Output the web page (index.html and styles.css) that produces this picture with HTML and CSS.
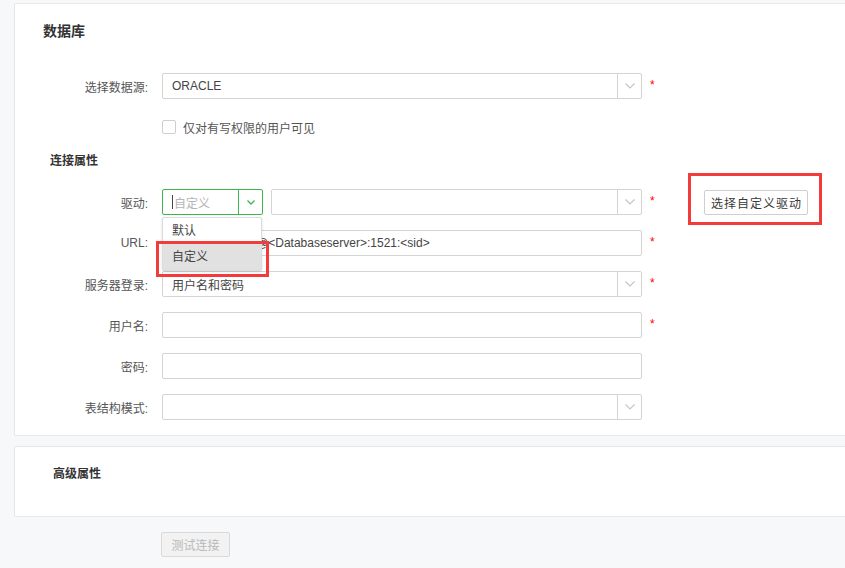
FILE: index.html
```html
<!DOCTYPE html>
<html lang="zh-CN">
<head>
<meta charset="utf-8">
<title>数据库连接</title>
<link rel="stylesheet" href="styles.css">
</head>
<body>
<div class="page">
  <section class="card card-db">
    <h2 class="card-title">数据库</h2>
    <div class="form">
      <div class="row">
        <label class="lbl">选择数据源:</label>
        <div class="select w-full"><span class="val">ORACLE</span><span class="arrow"><svg width="10" height="6" viewBox="0 0 10 6"><polyline points="0.5,0.5 5,5 9.5,0.5" fill="none" stroke="#c4c4c4" stroke-width="1.1"/></svg></span></div>
        <span class="req">*</span>
      </div>
      <div class="row-check">
        <span class="check"></span><span class="check-text">仅对有写权限的用户可见</span>
      </div>
      <h3 class="sub-title">连接属性</h3>
      <div class="row">
        <label class="lbl">驱动:</label>
        <div class="drive-wrap">
          <div class="select select-green small"><span class="val placeholder"><span class="caret"></span>自定义</span><span class="arrow"><svg width="8" height="5" viewBox="0 0 8 5"><polyline points="0.5,0.5 4,4 7.5,0.5" fill="none" stroke="#3cb54a" stroke-width="1.3"/></svg></span></div>
          <div class="menu">
            <div class="menu-item">默认</div>
            <div class="menu-item active">自定义</div>
            <span class="annot annot-item"></span>
          </div>
        </div>
        <div class="select w-rest"><span class="val"></span><span class="arrow"><svg width="10" height="6" viewBox="0 0 10 6"><polyline points="0.5,0.5 5,5 9.5,0.5" fill="none" stroke="#c4c4c4" stroke-width="1.1"/></svg></span></div>
        <span class="req">*</span>
        <div class="btn-wrap">
          <button class="btn">选择自定义驱动</button>
          <span class="annot annot-btn"></span>
        </div>
      </div>
      <div class="row">
        <label class="lbl">URL:</label>
        <div class="input w-full">jdbc:oracle:thin:@&lt;Databaseserver&gt;:1521:&lt;sid&gt;</div>
        <span class="req">*</span>
      </div>
      <div class="row">
        <label class="lbl">服务器登录:</label>
        <div class="select w-full"><span class="val">用户名和密码</span><span class="arrow"><svg width="10" height="6" viewBox="0 0 10 6"><polyline points="0.5,0.5 5,5 9.5,0.5" fill="none" stroke="#c4c4c4" stroke-width="1.1"/></svg></span></div>
        <span class="req">*</span>
      </div>
      <div class="row">
        <label class="lbl">用户名:</label>
        <div class="input w-full"></div>
        <span class="req">*</span>
      </div>
      <div class="row">
        <label class="lbl">密码:</label>
        <div class="input w-full"></div>
      </div>
      <div class="row">
        <label class="lbl">表结构模式:</label>
        <div class="select w-full"><span class="val"></span><span class="arrow"><svg width="10" height="6" viewBox="0 0 10 6"><polyline points="0.5,0.5 5,5 9.5,0.5" fill="none" stroke="#c4c4c4" stroke-width="1.1"/></svg></span></div>
      </div>
    </div>
  </section>
  <section class="card card-adv">
    <h3 class="adv-title">高级属性</h3>
  </section>
  <div class="actions">
    <button class="btn-test" disabled>测试连接</button>
  </div>
</div>
</body>
</html>
```
FILE: styles.css
```css
html, body {
  margin: 0;
  padding: 0;
  overflow: hidden;
  background: #f7f8fa;
}
body {
  font-family: "Liberation Sans", "Noto Sans CJK SC", sans-serif;
  font-size: 12px;
  color: #444;
}
* { box-sizing: border-box; }

.page {
  padding: 3px 0 0 14px;
  width: 860px;
}

.card {
  background: #fff;
  border: 1px solid #e6e7e9;
  border-radius: 2px;
}
.card-db {
  height: 433px;
}
.card-title {
  margin: 0;
  padding: 19px 0 0 28px;
  font-size: 14px;
  line-height: 16px;
  font-weight: bold;
  color: #333;
}
.form {
  margin-top: 34px;
}
.row {
  display: flex;
  align-items: center;
  height: 26px;
  margin-bottom: 15px;
}
.lbl {
  width: 147px;
  padding-right: 14px;
  text-align: right;
  color: #555;
  white-space: nowrap;
}
.select, .input {
  height: 26px;
  border: 1px solid #d4d4d4;
  border-radius: 2px;
  background: #fff;
  display: flex;
  align-items: center;
}
.w-full { width: 480px; }
.w-rest { width: 371px; margin-left: 8px; }
.input {
  padding-left: 9px;
  color: #444;
  white-space: nowrap;
  overflow: hidden;
}
.select .val {
  flex: 1;
  padding-left: 9px;
  color: #444;
  white-space: nowrap;
}
.select .arrow {
  width: 24px;
  height: 100%;
  border-left: 1px solid #d4d4d4;
  display: flex;
  align-items: center;
  justify-content: center;
}
.select-green {
  border-color: #3cb54a;
}
.select-green .arrow {
  border-left-color: #3cb54a;
}
.small { width: 101px; }
.placeholder {
  color: #b5b5b5 !important;
  display: flex;
  align-items: center;
}
.caret {
  display: inline-block;
  width: 1px;
  height: 14px;
  background: #444;
  margin-right: 1px;
}
.req {
  margin-left: 8px;
  width: 22px;
  color: #f00;
  font-size: 12px;
  align-self: flex-start;
  line-height: 18px;
  padding-top: 3px;
}

.row-check {
  display: flex;
  align-items: center;
  margin: 21px 0 0 147px;
  height: 14px;
}
.check {
  width: 14px;
  height: 14px;
  border: 1px solid #cfcfcf;
  border-radius: 2px;
  background: #fff;
}
.check-text {
  margin-left: 7px;
  color: #555;
}
.sub-title {
  margin: 19px 0 20px 35px;
  font-size: 12px;
  line-height: 16px;
  font-weight: bold;
  color: #333;
}

.drive-wrap {
  position: relative;
}
.menu {
  position: absolute;
  top: 28px;
  left: 0;
  width: 100px;
  background: #fff;
  border: 1px solid #dcdcdc;
  border-radius: 2px;
  box-shadow: 0 1px 3px rgba(0,0,0,0.12);
  z-index: 5;
}
.menu-item {
  height: 26px;
  line-height: 26px;
  padding-left: 9px;
  color: #444;
}
.menu-item.active {
  background: #e1e1e2;
}
.annot {
  position: absolute;
  border: 3px solid #f23b3b;
  pointer-events: none;
}
.annot-item {
  left: -7px;
  top: 23px;
  width: 113px;
  height: 36px;
}
.btn-wrap {
  position: relative;
  margin-left: 32px;
}
.btn {
  height: 25px;
  width: 104px;
  padding: 0 0 0 1px;
  border: 1px solid #cfcfcf;
  border-radius: 2px;
  background: #fff;
  color: #3a3a3a;
  font-family: inherit;
  font-size: 12px;
  letter-spacing: 1px;
  display: block;
}
.annot-btn {
  left: -16px;
  top: -17px;
  right: -14px;
  bottom: -10px;
}

.card-adv {
  margin-top: 10px;
  height: 71px;
}
.adv-title {
  margin: 0;
  padding: 19px 0 0 38px;
  font-size: 12px;
  line-height: 16px;
  font-weight: bold;
  color: #333;
}
.actions {
  margin: 15px 0 0 147px;
}
.btn-test {
  width: 69px;
  height: 25px;
  border: 1px solid #d9d9d9;
  border-radius: 2px;
  background: #f2f2f2;
  color: #b8b8b8;
  font-family: inherit;
  font-size: 12px;
  padding: 0;
}
```
